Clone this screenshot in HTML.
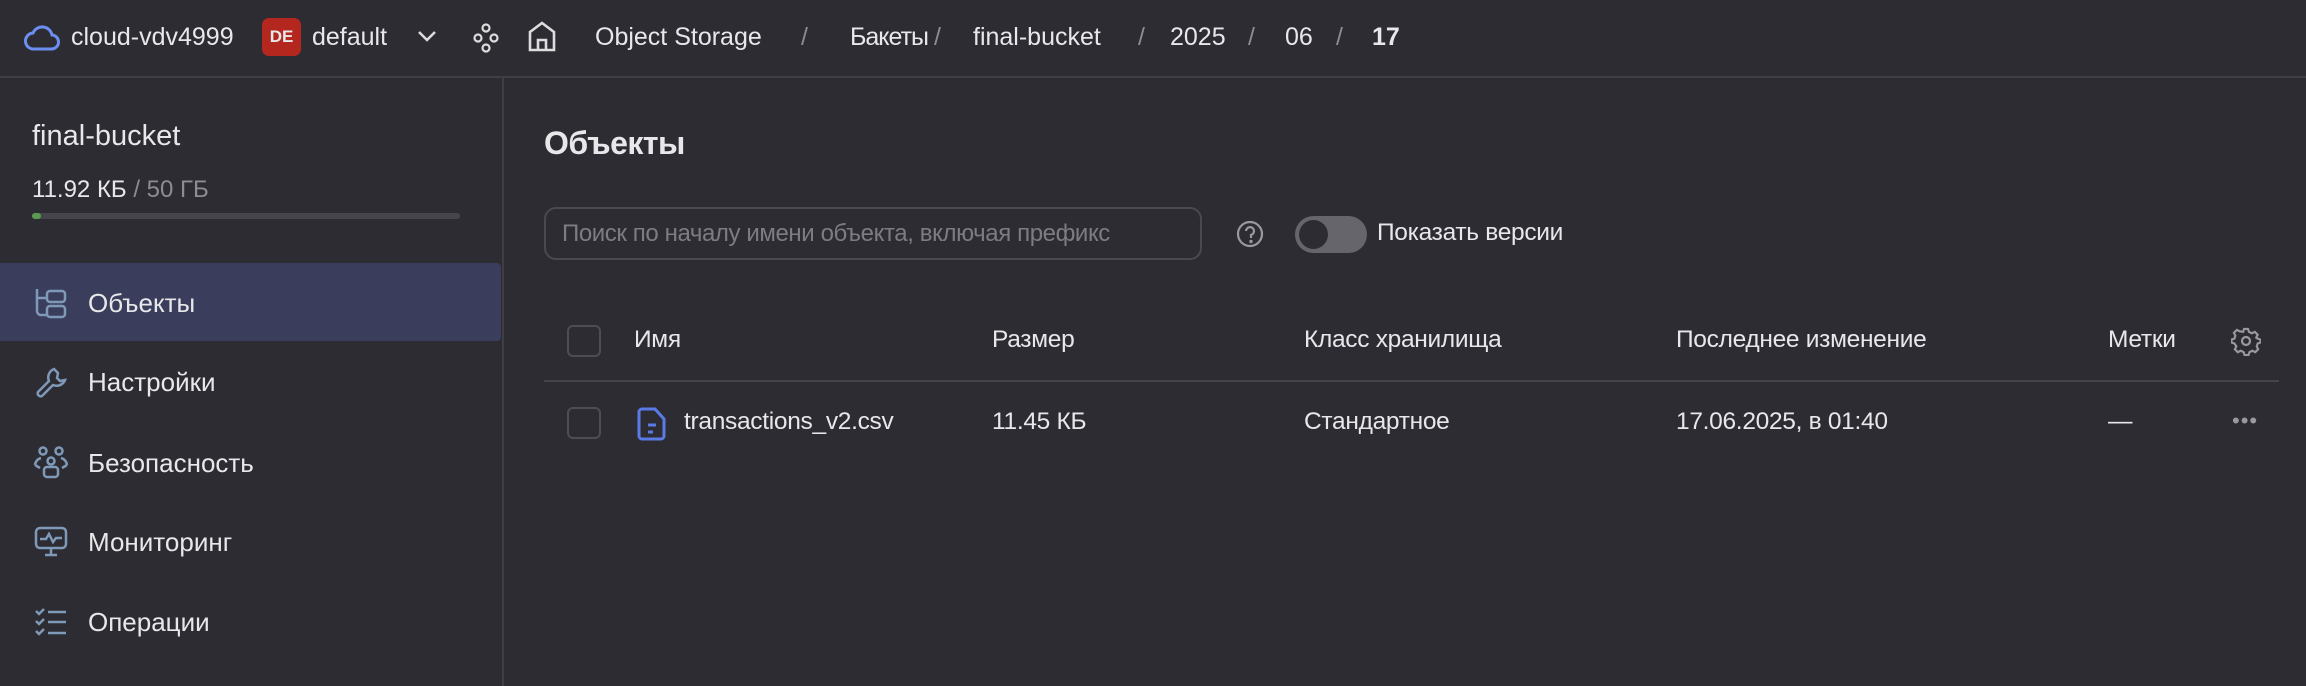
<!DOCTYPE html>
<html><head><meta charset="utf-8"><style>
*{box-sizing:border-box;margin:0;padding:0}
body{width:2306px;height:686px;background:#2d2c33;color:#e8e8ea;font-family:"Liberation Sans","DejaVu Sans",sans-serif;position:relative;overflow:hidden}
.a{position:absolute;white-space:nowrap}
.top{font-size:25px;top:23px}
.sl{color:#8d8c92;font-size:25px;top:23px}
.nav{font-size:26px;left:88px}
.ic{position:absolute}
.h{font-size:24.5px;top:326px;letter-spacing:-0.3px}
.r{font-size:24.5px;top:408px;letter-spacing:-0.3px}
.cb{position:absolute;width:34px;height:32px;border:2px solid #4e4d54;border-radius:6px}
</style></head><body>
<div class="a" style="left:0;top:76px;width:2306px;height:2px;background:#3f3e45"></div>
<div class="a" style="left:502px;top:78px;width:2px;height:608px;background:#3f3e45"></div>

<svg class="ic" style="left:24px;top:22px" width="36" height="30" viewBox="0 0 36 30"><path d="M10 27h17a7 7 0 0 0 1-14 10 10 0 0 0-19-2A8 8 0 0 0 10 27z" fill="none" stroke="#6c8ef0" stroke-width="3"/></svg>
<div class="a top" style="left:71px">cloud-vdv4999</div>
<div class="a" style="left:262px;top:18px;width:39px;height:38px;background:#b3271e;border-radius:7px;font-size:17px;font-weight:bold;text-align:center;line-height:38px">DE</div>
<div class="a top" style="left:312px">default</div>
<svg class="ic" style="left:416px;top:28px" width="22" height="16"><path d="M3 4l8 8 8-8" fill="none" stroke="#ddd" stroke-width="2.5"/></svg>
<svg class="ic" style="left:472px;top:22px" width="28" height="32" fill="none" stroke="#ddd" stroke-width="2.2"><circle cx="14" cy="6" r="3.5"/><circle cx="6" cy="16" r="3.5"/><circle cx="22" cy="16" r="3.5"/><circle cx="14" cy="26" r="3.5"/></svg>
<svg class="ic" style="left:527px;top:20px" width="30" height="34" fill="none" stroke="#ddd" stroke-width="2.6"><path d="M3 30V12l12-9 12 9v18z"/><path d="M11 30V20h8v10"/></svg>
<div class="a top" style="left:595px">Object Storage</div>
<div class="a sl" style="left:801px">/</div>
<div class="a top" style="left:850px;letter-spacing:-1px">Бакеты</div>
<div class="a sl" style="left:934px">/</div>
<div class="a top" style="left:973px">final-bucket</div>
<div class="a sl" style="left:1138px">/</div>
<div class="a top" style="left:1170px">2025</div>
<div class="a sl" style="left:1248px">/</div>
<div class="a top" style="left:1285px">06</div>
<div class="a sl" style="left:1336px">/</div>
<div class="a top" style="left:1372px;font-weight:bold">17</div>

<div class="a" style="left:32px;top:120px;font-size:29px">final-bucket</div>
<div class="a" style="left:32px;top:176px;font-size:24px">11.92 КБ <span style="color:#8d8c92">/ 50 ГБ</span></div>
<div class="a" style="left:32px;top:213px;width:428px;height:6px;background:#46454c;border-radius:3px"><div style="width:9px;height:6px;background:#5a9a55;border-radius:3px"></div></div>
<div class="a" style="left:0;top:263px;width:501px;height:78px;background:#3a3e5c;border-radius:0 4px 4px 0"></div>

<svg class="ic" style="left:34px;top:287px" width="34" height="32" fill="none" stroke="#7f99b8" stroke-width="2.5"><path d="M3 2v22a4 4 0 0 0 4 4h6M3 11h10"/><rect x="13" y="4" width="18" height="11" rx="3"/><rect x="13" y="19" width="18" height="11" rx="3"/></svg>
<div class="a nav" style="top:288px">Объекты</div>
<svg class="ic" style="left:34px;top:366px" width="34" height="34" fill="none" stroke="#7f99b8" stroke-width="2.5"><path d="M20 3a9 9 0 0 0-5 12L4 26a3 3 0 0 0 4 4l11-11a9 9 0 0 0 12-5l-5 1-3-3 1-5z"/></svg>
<div class="a nav" style="top:367px">Настройки</div>
<svg class="ic" style="left:32px;top:446px" width="38" height="34" fill="none" stroke="#7f99b8" stroke-width="2.5"><circle cx="11" cy="5" r="3.5"/><circle cx="27" cy="5" r="3.5"/><circle cx="19" cy="15" r="3.5"/><rect x="12" y="21" width="14" height="10" rx="3"/><path d="M3 19a8 8 0 0 1 6-7M35 19a8 8 0 0 0-6-7M3 19l5 3M35 19l-5 3"/></svg>
<div class="a nav" style="top:448px">Безопасность</div>
<svg class="ic" style="left:34px;top:526px" width="34" height="32" fill="none" stroke="#7f99b8" stroke-width="2.5"><rect x="2" y="2" width="30" height="20" rx="4"/><path d="M6 13h6l3-5 4 8 3-4h6M11 29h12M17 22v7"/></svg>
<div class="a nav" style="top:527px">Мониторинг</div>
<svg class="ic" style="left:34px;top:607px" width="34" height="30" fill="none" stroke="#7f99b8" stroke-width="2.5"><path d="M2 4l3 3 5-5M2 14l3 3 5-5M2 24l3 3 5-5M14 5h18M14 15h18M14 26h18"/></svg>
<div class="a nav" style="top:607px">Операции</div>

<div class="a" style="left:544px;top:125px;font-size:32px;font-weight:bold;letter-spacing:-0.5px">Объекты</div>
<div class="a" style="left:544px;top:207px;width:658px;height:53px;border:2px solid #4a4950;border-radius:12px"></div>
<div class="a" style="left:562px;top:220px;font-size:24px;color:#7d7c83;letter-spacing:-0.4px">Поиск по началу имени объекта, включая префикс</div>
<svg class="ic" style="left:1235px;top:219px" width="30" height="30" fill="none" stroke="#9a999f" stroke-width="2.2"><circle cx="15" cy="15" r="12"/><path d="M11 12a4 4 0 1 1 5 4v3"/><circle cx="16" cy="22.5" r="0.6" fill="#9a999f"/></svg>
<div class="a" style="left:1295px;top:216px;width:72px;height:37px;background:#66656b;border-radius:19px"><div style="position:absolute;left:4px;top:4px;width:29px;height:29px;border-radius:50%;background:#2d2c33"></div></div>
<div class="a" style="left:1377px;top:219px;font-size:24.5px;letter-spacing:-0.3px">Показать версии</div>

<div class="cb" style="left:567px;top:325px"></div>
<div class="a h" style="left:634px">Имя</div>
<div class="a h" style="left:992px">Размер</div>
<div class="a h" style="left:1304px">Класс хранилища</div>
<div class="a h" style="left:1676px">Последнее изменение</div>
<div class="a h" style="left:2108px">Метки</div>
<svg class="ic" style="left:2231px;top:326px" width="30" height="30" fill="none" stroke="#9a999f" stroke-width="2.2"><circle cx="15" cy="15" r="4"/><path d="M13 3h4l1 3 3 1.5 3-1.5 3 3-1.5 3L27 13l3 1v3l-3 1-1 3 1.5 3-3 3-3-1.5-3 1.5-1 3h-4l-1-3-3-1.5-3 1.5-3-3 1.5-3L3 18l-3-1v-3l3-1 1-3-1.5-3 3-3 3 1.5L12 6z" transform="translate(0.5 0) scale(0.97)"/></svg>
<div class="a" style="left:544px;top:380px;width:1735px;height:2px;background:#45444b"></div>

<div class="cb" style="left:567px;top:407px"></div>
<svg class="ic" style="left:637px;top:406px" width="32" height="36" fill="none" stroke="#5a7ae6" stroke-width="3"><path d="M5 3h13l9 10v17a3 3 0 0 1-3 3H5a3 3 0 0 1-3-3V6a3 3 0 0 1 3-3z"/><path d="M11 19h8M11 26h5"/></svg>
<div class="a r" style="left:684px">transactions_v2.csv</div>
<div class="a r" style="left:992px">11.45 КБ</div>
<div class="a r" style="left:1304px">Стандартное</div>
<div class="a r" style="left:1676px">17.06.2025, в 01:40</div>
<div class="a r" style="left:2108px">—</div>
<div class="a" style="left:2232px;top:408px;font-size:22px;color:#9a999f;letter-spacing:1px">•••</div>
</body></html>
